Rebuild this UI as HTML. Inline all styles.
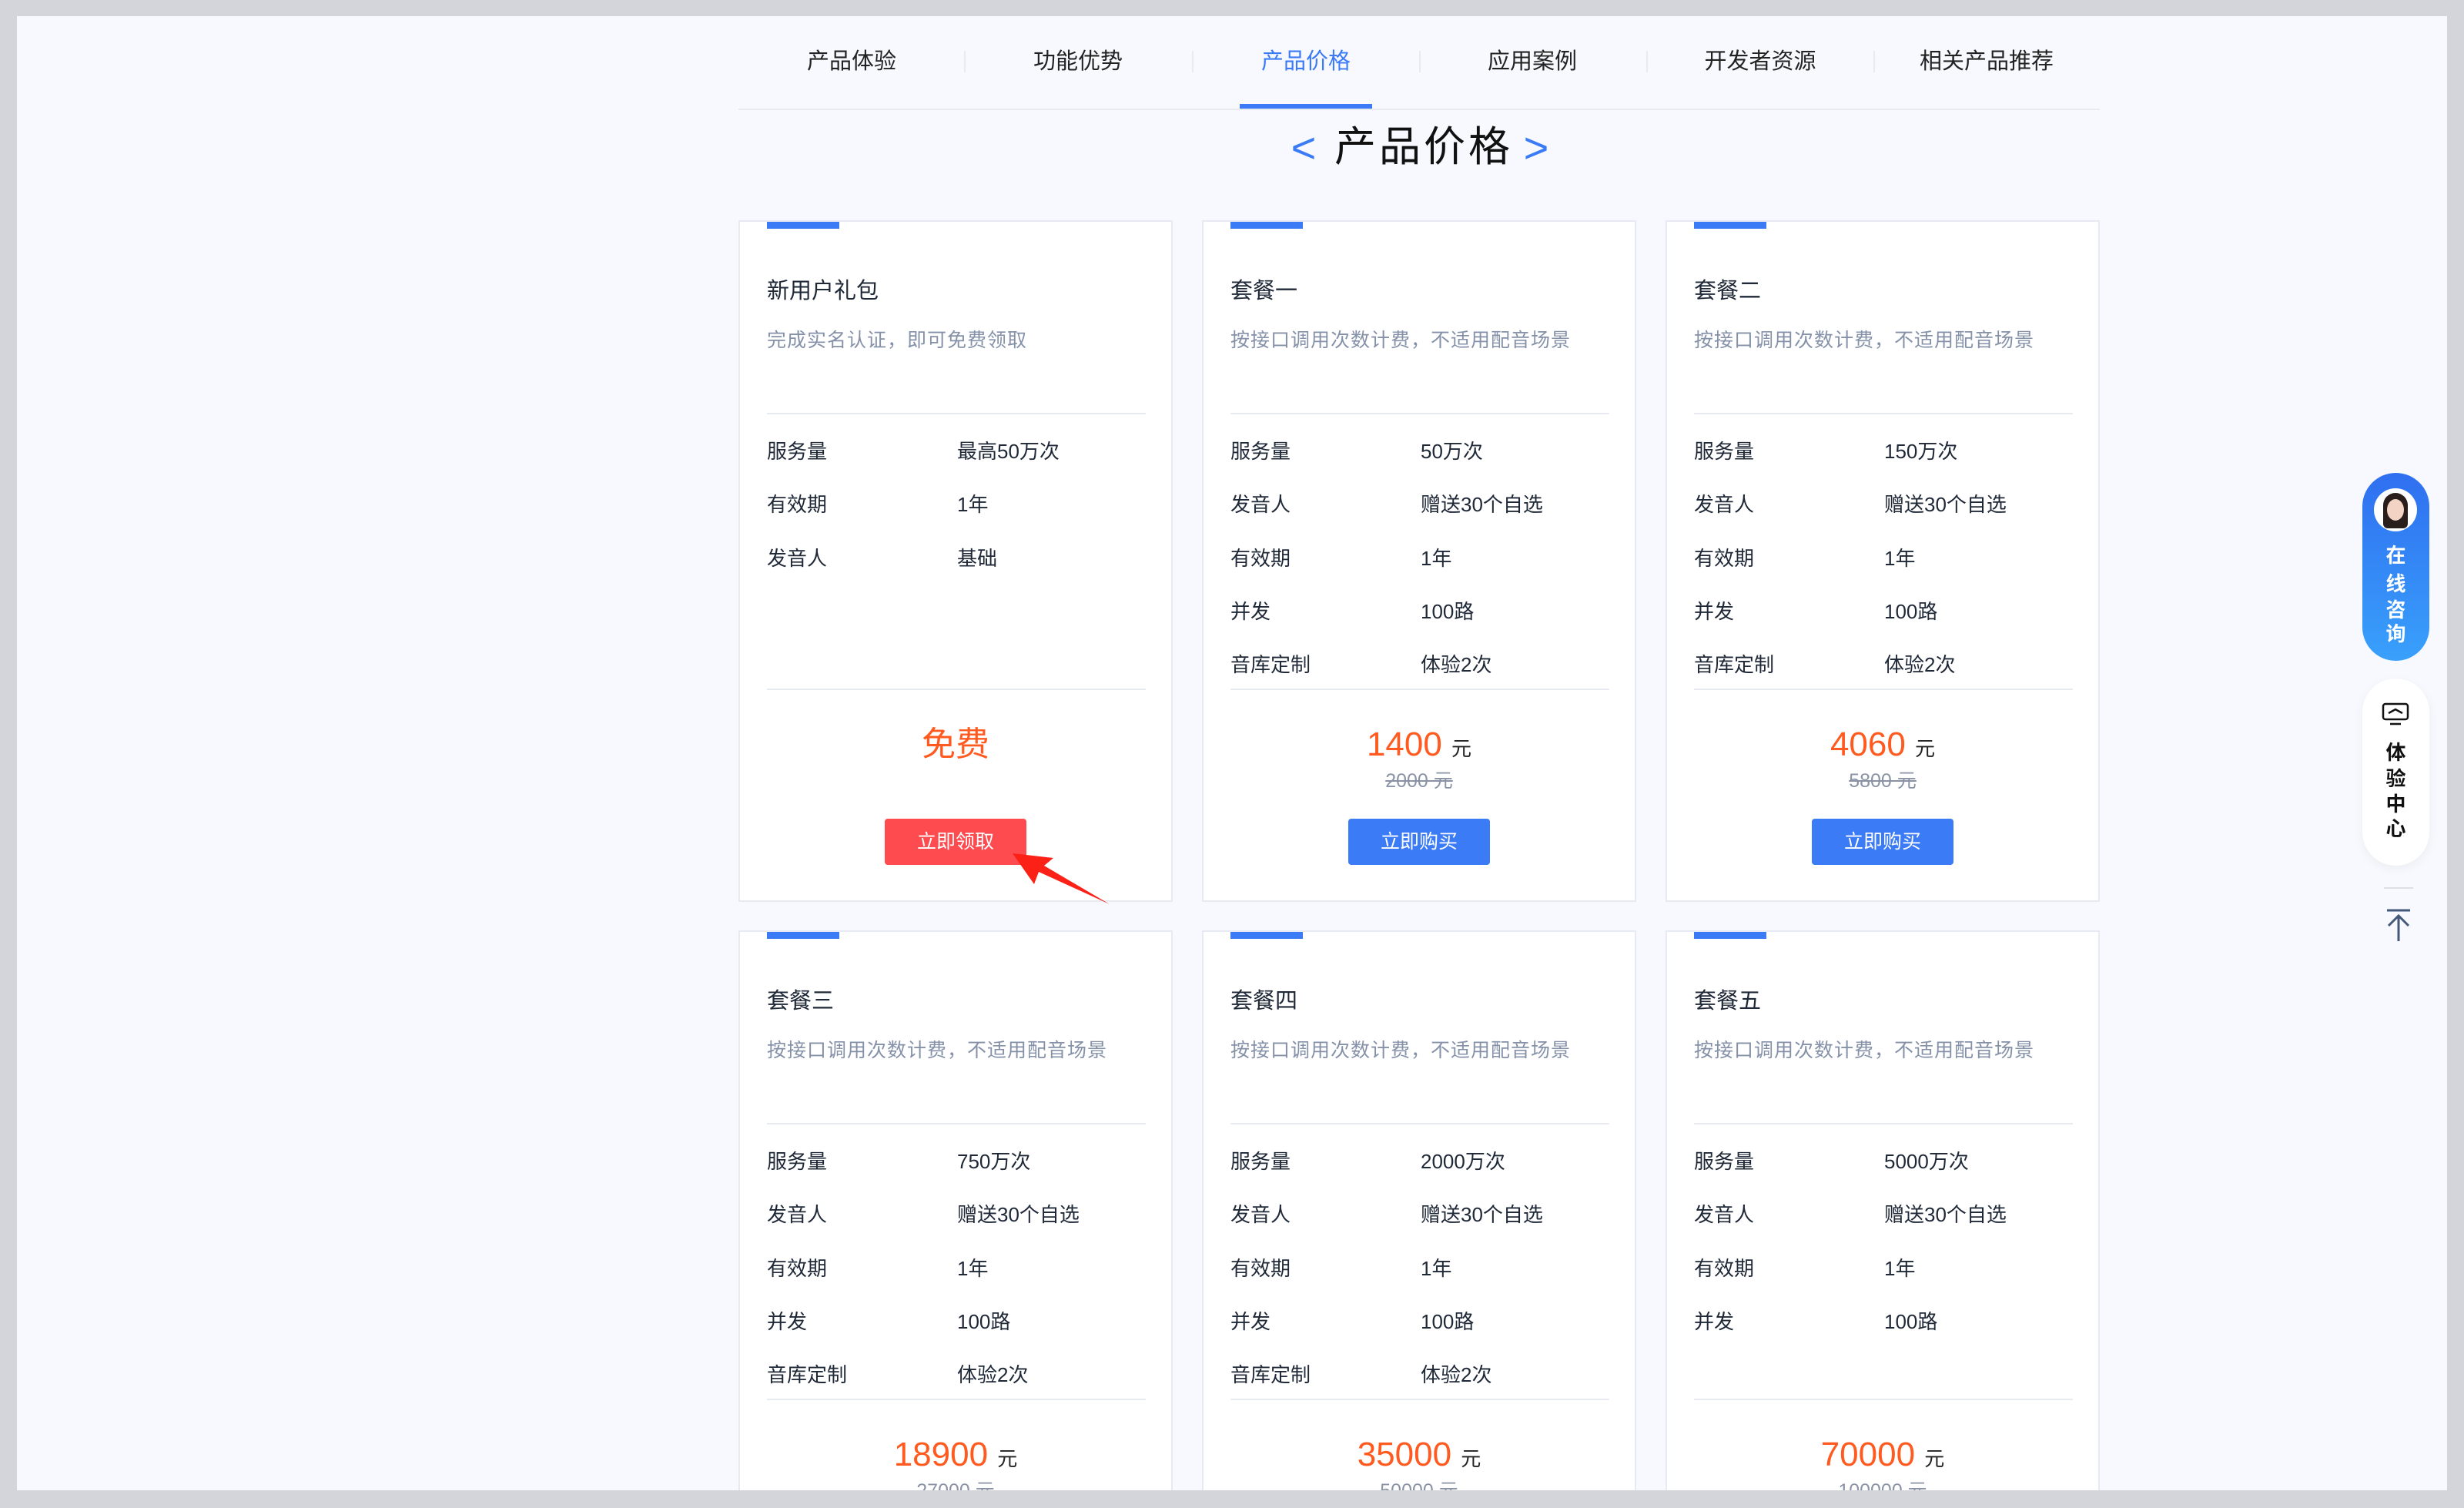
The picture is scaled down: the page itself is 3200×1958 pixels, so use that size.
<!DOCTYPE html>
<html style="width:3200px;height:1958px;overflow:hidden"><head><meta charset="utf-8"><style>
*{margin:0;padding:0;box-sizing:border-box}
body{width:3200px;height:1958px;overflow:hidden;background:#f7f9fe;font-family:"Liberation Sans","Noto Sans CJK SC",sans-serif;position:relative;color:#1f2837}
.a{position:absolute;white-space:nowrap}
.nav{top:60px;height:40px;line-height:40px;font-size:29px;color:#222;width:300px;text-align:center}
.sep{top:66px;width:2px;height:28px;background:#e8eaf0}
.card{position:absolute;width:564px;height:885px;background:#fff;border:2px solid #e7eaf3}
.r2{height:740px}
.bar{position:absolute;left:35px;top:0;width:94px;height:9px;background:#3b7bf5}
.t{position:absolute;left:35px;font-size:29px;line-height:40px;color:#1f2837}
.s{position:absolute;left:35px;font-size:25px;letter-spacing:1px;line-height:36px;color:#8591a8}
.hr{position:absolute;left:35px;width:492px;height:2px;background:#e8eaf2}
.l{position:absolute;left:35px;font-size:26px;line-height:36px;color:#1f2837}
.v{position:absolute;left:282px;font-size:26px;line-height:36px;color:#1f2837}
.p{position:absolute;left:0;width:560px;text-align:center;color:#ff5a1f;font-size:44px;line-height:52px}
.p small{font-size:26px;color:#222}
.o{position:absolute;left:0;width:560px;text-align:center;color:#8a93a6;font-size:25px;line-height:34px;text-decoration:line-through}
.btn{position:absolute;left:188px;width:184px;height:60px;border-radius:4px;background:#3b7bf5;color:#fff;font-size:25px;line-height:60px;text-align:center}
.v1{position:absolute;color:#fff;font-size:26px;font-weight:bold;width:87px;text-align:center;line-height:34px}
</style></head><body>

<div class="a nav" style="left:956px">产品体验</div>
<div class="a sep" style="left:1252px"></div>
<div class="a nav" style="left:1250px">功能优势</div>
<div class="a sep" style="left:1548px"></div>
<div class="a nav" style="left:1546px;color:#3b7bf5">产品价格</div>
<div class="a sep" style="left:1843px"></div>
<div class="a nav" style="left:1840px">应用案例</div>
<div class="a sep" style="left:2138px"></div>
<div class="a nav" style="left:2136px">开发者资源</div>
<div class="a sep" style="left:2433px"></div>
<div class="a nav" style="left:2430px">相关产品推荐</div>
<div class="a" style="left:959px;top:141px;width:1768px;height:2px;background:#e8eaf2"></div>
<div class="a" style="left:1610px;top:135px;width:172px;height:6px;background:#3b7bf5"></div>

<div class="a" style="left:1668px;top:160px;font-size:56px;line-height:64px;color:#3b7bf5;width:50px;text-align:center">&lt;</div>
<div class="a" style="left:1733px;top:158px;font-size:54px;line-height:66px;color:#111;letter-spacing:4px">产品价格</div>
<div class="a" style="left:1970px;top:160px;font-size:56px;line-height:64px;color:#3b7bf5;width:50px;text-align:center">&gt;</div>

<!-- Card 0 -->
<div class="card" style="left:959px;top:286px">
<div class="bar"></div>
<div class="t" style="top:70px">新用户礼包</div>
<div class="s" style="top:136px">完成实名认证，即可免费领取</div>
<div class="hr" style="top:248px"></div>
<div class="l" style="top:280px">服务量</div><div class="v" style="top:280px">最高50万次</div>
<div class="l" style="top:349px">有效期</div><div class="v" style="top:349px">1年</div>
<div class="l" style="top:419px">发音人</div><div class="v" style="top:419px">基础</div>
<div class="hr" style="top:606px"></div>
<div class="p" style="top:653px">免费</div>
<div class="btn" style="top:775px;background:#fd4b50">立即领取</div>
</div>

<!-- Card 1 -->
<div class="card" style="left:1561px;top:286px">
<div class="bar"></div>
<div class="t" style="top:70px">套餐一</div>
<div class="s" style="top:136px">按接口调用次数计费，不适用配音场景</div>
<div class="hr" style="top:248px"></div>
<div class="l" style="top:280px">服务量</div><div class="v" style="top:280px">50万次</div>
<div class="l" style="top:349px">发音人</div><div class="v" style="top:349px">赠送30个自选</div>
<div class="l" style="top:419px">有效期</div><div class="v" style="top:419px">1年</div>
<div class="l" style="top:488px">并发</div><div class="v" style="top:488px">100路</div>
<div class="l" style="top:557px">音库定制</div><div class="v" style="top:557px">体验2次</div>
<div class="hr" style="top:606px"></div>
<div class="p" style="top:653px">1400 <small>元</small></div>
<div class="o" style="top:709px">2000 元</div>
<div class="btn" style="top:775px">立即购买</div>
</div>

<!-- Card 2 -->
<div class="card" style="left:2163px;top:286px">
<div class="bar"></div>
<div class="t" style="top:70px">套餐二</div>
<div class="s" style="top:136px">按接口调用次数计费，不适用配音场景</div>
<div class="hr" style="top:248px"></div>
<div class="l" style="top:280px">服务量</div><div class="v" style="top:280px">150万次</div>
<div class="l" style="top:349px">发音人</div><div class="v" style="top:349px">赠送30个自选</div>
<div class="l" style="top:419px">有效期</div><div class="v" style="top:419px">1年</div>
<div class="l" style="top:488px">并发</div><div class="v" style="top:488px">100路</div>
<div class="l" style="top:557px">音库定制</div><div class="v" style="top:557px">体验2次</div>
<div class="hr" style="top:606px"></div>
<div class="p" style="top:653px">4060 <small>元</small></div>
<div class="o" style="top:709px">5800 元</div>
<div class="btn" style="top:775px">立即购买</div>
</div>

<!-- Row 2 -->
<div class="card r2" style="left:959px;top:1208px">
<div class="bar"></div>
<div class="t" style="top:70px">套餐三</div>
<div class="s" style="top:136px">按接口调用次数计费，不适用配音场景</div>
<div class="hr" style="top:248px"></div>
<div class="l" style="top:280px">服务量</div><div class="v" style="top:280px">750万次</div>
<div class="l" style="top:349px">发音人</div><div class="v" style="top:349px">赠送30个自选</div>
<div class="l" style="top:419px">有效期</div><div class="v" style="top:419px">1年</div>
<div class="l" style="top:488px">并发</div><div class="v" style="top:488px">100路</div>
<div class="l" style="top:557px">音库定制</div><div class="v" style="top:557px">体验2次</div>
<div class="hr" style="top:606px"></div>
<div class="p" style="top:653px">18900 <small>元</small></div>
<div class="o" style="top:709px">27000 元</div>
</div>
<div class="card r2" style="left:1561px;top:1208px">
<div class="bar"></div>
<div class="t" style="top:70px">套餐四</div>
<div class="s" style="top:136px">按接口调用次数计费，不适用配音场景</div>
<div class="hr" style="top:248px"></div>
<div class="l" style="top:280px">服务量</div><div class="v" style="top:280px">2000万次</div>
<div class="l" style="top:349px">发音人</div><div class="v" style="top:349px">赠送30个自选</div>
<div class="l" style="top:419px">有效期</div><div class="v" style="top:419px">1年</div>
<div class="l" style="top:488px">并发</div><div class="v" style="top:488px">100路</div>
<div class="l" style="top:557px">音库定制</div><div class="v" style="top:557px">体验2次</div>
<div class="hr" style="top:606px"></div>
<div class="p" style="top:653px">35000 <small>元</small></div>
<div class="o" style="top:709px">50000 元</div>
</div>
<div class="card r2" style="left:2163px;top:1208px">
<div class="bar"></div>
<div class="t" style="top:70px">套餐五</div>
<div class="s" style="top:136px">按接口调用次数计费，不适用配音场景</div>
<div class="hr" style="top:248px"></div>
<div class="l" style="top:280px">服务量</div><div class="v" style="top:280px">5000万次</div>
<div class="l" style="top:349px">发音人</div><div class="v" style="top:349px">赠送30个自选</div>
<div class="l" style="top:419px">有效期</div><div class="v" style="top:419px">1年</div>
<div class="l" style="top:488px">并发</div><div class="v" style="top:488px">100路</div>
<div class="hr" style="top:606px"></div>
<div class="p" style="top:653px">70000 <small>元</small></div>
<div class="o" style="top:709px">100000 元</div>
</div>

<!-- red arrow -->
<svg class="a" style="left:1300px;top:1100px" width="160" height="90"><polygon points="15,8 68,14 56,24 141,74 49,32 43,48" fill="#fb2116"/></svg>

<!-- sidebar -->
<div class="a" style="left:3068px;top:614px;width:87px;height:244px;border-radius:44px;background:linear-gradient(#2f6ff0,#39a0fb)"></div>
<div class="a" style="left:3083px;top:634px;width:56px;height:56px;border-radius:50%;background:#fff;overflow:hidden"><div style="position:absolute;left:12px;top:6px;width:32px;height:46px;border-radius:16px 16px 6px 6px;background:#2a1e1c"></div><div style="position:absolute;left:17px;top:14px;width:22px;height:28px;border-radius:50%;background:#f2d3c4"></div></div>
<div class="a v1" style="left:3068px;top:704px">在</div>
<div class="a v1" style="left:3068px;top:741px">线</div>
<div class="a v1" style="left:3068px;top:775px">咨</div>
<div class="a v1" style="left:3068px;top:806px">询</div>
<div class="a" style="left:3068px;top:881px;width:87px;height:243px;border-radius:44px;background:#fff;box-shadow:0 4px 14px rgba(0,0,0,0.05)"></div>
<svg class="a" style="left:3093px;top:912px" width="36" height="30"><rect x="2" y="2" width="32" height="20" rx="3" fill="none" stroke="#111" stroke-width="2.5"/><path d="M9 14 L18 9 L27 14" fill="none" stroke="#111" stroke-width="2.5"/><path d="M11 28 H25" stroke="#111" stroke-width="2.5"/></svg>
<div class="a v1" style="left:3068px;top:960px;color:#111">体</div>
<div class="a v1" style="left:3068px;top:994px;color:#111">验</div>
<div class="a v1" style="left:3068px;top:1027px;color:#111">中</div>
<div class="a v1" style="left:3068px;top:1059px;color:#111">心</div>
<div class="a" style="left:3096px;top:1152px;width:38px;height:2px;background:#dcdfe6"></div>
<svg class="a" style="left:3096px;top:1178px" width="40" height="46"><path d="M4 4 H34" stroke="#46587a" stroke-width="3"/><path d="M19 10 V44 M6 24 L19 11 L32 24" fill="none" stroke="#46587a" stroke-width="3"/></svg>

<!-- gray frame -->
<div class="a" style="left:0;top:0;width:3200px;height:21px;background:#d4d5da"></div>
<div class="a" style="left:0;top:0;width:22px;height:1958px;background:#d4d5da"></div>
<div class="a" style="left:3178px;top:0;width:22px;height:1958px;background:#d4d5da"></div>
<div class="a" style="left:0;top:1935px;width:3200px;height:23px;background:#d4d5da"></div>
</body></html>
